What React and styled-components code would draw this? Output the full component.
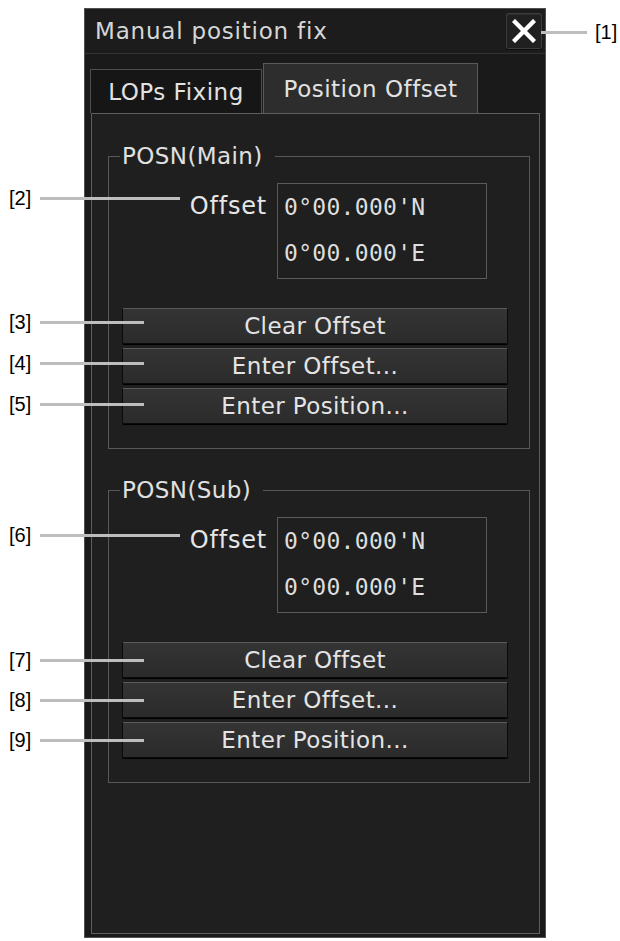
import React from "react";
import styled, { createGlobalStyle } from "styled-components";

const GlobalStyle = createGlobalStyle`
  html, body {
    margin: 0;
    padding: 0;
    background: #ffffff;
  }
  body {
    font-family: "DejaVu Sans", "Noto Sans", sans-serif;
  }
`;

const Page = styled.div`
  position: relative;
  width: 620px;
  height: 941px;
  box-sizing: border-box;
  padding: 8px 0 0 84px;
  overflow: hidden;
`;

const Window = styled.div`
  width: 462px;
  height: 930px;
  box-sizing: border-box;
  display: flex;
  flex-direction: column;
  background: #1a1a1a;
  border: 1px solid #505050;
`;

const TitleBar = styled.div`
  height: 44px;
  flex: none;
  display: flex;
  align-items: center;
  justify-content: space-between;
  padding: 0 3px 0 10px;
  border-bottom: 1px solid #333;
  background: #1c1c1c;
`;

const Title = styled.div`
  color: #d6d6d6;
  font-size: 23px;
  letter-spacing: 0.8px;
`;

const CloseButton = styled.button`
  width: 36px;
  height: 36px;
  padding: 0;
  display: flex;
  align-items: center;
  justify-content: center;
  background: #202020;
  border: 1px solid #3c3c3c;
  border-radius: 2px;
  box-shadow: inset 0 1px 0 #2e2e2e, 0 1px 0 #0c0c0c;
  cursor: pointer;
`;

const TabRow = styled.div`
  flex: none;
  display: flex;
  align-items: flex-end;
  height: 59px;
  padding-left: 5px;
`;

const Tab = styled.div`
  box-sizing: border-box;
  width: ${(p) => p.$width}px;
  height: ${(p) => (p.$active ? 50 : 44)}px;
  display: flex;
  align-items: center;
  justify-content: center;
  color: #e2e2e2;
  font-size: 23px;
  letter-spacing: 0.5px;
  background: ${(p) => (p.$active ? "#2d2d2d" : "#161616")};
  border: 1px solid ${(p) => (p.$active ? "#5a5a5a" : "#4e4e4e")};
  border-bottom: none;
  margin-right: 1px;
`;

const Panel = styled.div`
  flex: 1;
  margin: 0 5px 3px 6px;
  padding: 29px 9px 0 16px;
  background: #1f1f1f;
  border: 1px solid #5e5e5e;
  display: flex;
  flex-direction: column;
  gap: 28px;
`;

const Group = styled.fieldset`
  margin: 0;
  padding: 0 0 24px 13px;
  width: 422px;
  box-sizing: border-box;
  border: 1px solid #585858;
  min-width: 0;
`;

const Legend = styled.legend`
  margin-left: -2px;
  padding: 0 12px 0 2px;
  height: 26px;
  line-height: 26px;
  color: #e0e0e0;
  font-size: 23px;
  letter-spacing: 0.4px;
`;

const OffsetRow = styled.div`
  display: grid;
  grid-template-columns: 155px 210px;
  margin-top: 14px;
`;

const OffsetLabel = styled.div`
  text-align: right;
  padding: 0 10px 0 0;
  line-height: 46px;
  color: #e6e6e6;
  font-size: 24px;
  letter-spacing: 0.8px;
`;

const OffsetBox = styled.div`
  box-sizing: border-box;
  height: 96px;
  border: 1px solid #5a5a5a;
  padding-left: 6px;
`;

const OffsetValue = styled.div`
  line-height: 46px;
  color: #dedede;
  font-family: "DejaVu Sans Mono", monospace;
  font-size: 23px;
  letter-spacing: 0.3px;
`;

const ButtonStack = styled.div`
  margin-top: 29px;
  width: 386px;
  display: flex;
  flex-direction: column;
  gap: 4px;
`;

const ActionButton = styled.button`
  box-sizing: border-box;
  height: 36px;
  padding: 0;
  font-family: inherit;
  font-size: 23px;
  letter-spacing: 0.4px;
  color: #e4e4e4;
  background: linear-gradient(#343434, #2b2b2b);
  border: 1px solid #0a0a0a;
  border-top: 1px solid #5a5a5a;
  border-radius: 2px;
  box-shadow: 0 1px 0 #000;
  cursor: pointer;
`;

const Callout = styled.div`
  position: absolute;
  top: ${(p) => p.$y - 12}px;
  left: ${(p) => p.$x}px;
  height: 24px;
  display: flex;
  align-items: center;
  gap: ${(p) => p.$gap || 9}px;
`;

const CalloutLabel = styled.span`
  font-family: "Liberation Sans", Arial, sans-serif;
  font-size: 20px;
  color: #000;
`;

const CalloutLine = styled.span`
  display: block;
  width: ${(p) => p.$length}px;
  height: 3px;
  background: #bdbdbd;
`;

const CloseIcon = () => (
  <svg width="24" height="24" viewBox="0 0 24 24">
    <path
      d="M3 3 L21 21 M21 3 L3 21"
      stroke="#ffffff"
      strokeWidth="4.4"
      strokeLinecap="square"
      fill="none"
    />
  </svg>
);

const PositionGroup = ({ title }) => (
  <Group>
    <Legend>{title}</Legend>
    <OffsetRow>
      <OffsetLabel>Offset</OffsetLabel>
      <OffsetBox>
        <OffsetValue>0°00.000'N</OffsetValue>
        <OffsetValue>0°00.000'E</OffsetValue>
      </OffsetBox>
    </OffsetRow>
    <ButtonStack>
      <ActionButton>Clear Offset</ActionButton>
      <ActionButton>Enter Offset...</ActionButton>
      <ActionButton>Enter Position...</ActionButton>
    </ButtonStack>
  </Group>
);

const leftCallouts = [
  { n: 2, y: 198, len: 140 },
  { n: 3, y: 322, len: 104 },
  { n: 4, y: 363, len: 104 },
  { n: 5, y: 404, len: 104 },
  { n: 6, y: 535, len: 140 },
  { n: 7, y: 660, len: 104 },
  { n: 8, y: 700, len: 104 },
  { n: 9, y: 740, len: 104 },
];

export default function App() {
  return (
    <>
      <GlobalStyle />
      <Page>
        <Window>
          <TitleBar>
            <Title>Manual position fix</Title>
            <CloseButton>
              <CloseIcon />
            </CloseButton>
          </TitleBar>
          <TabRow>
            <Tab $width={172}>LOPs Fixing</Tab>
            <Tab $width={215} $active>
              Position Offset
            </Tab>
          </TabRow>
          <Panel>
            <PositionGroup title="POSN(Main)" />
            <PositionGroup title="POSN(Sub)" />
          </Panel>
        </Window>

        <Callout $x={541} $y={32} $gap={8}>
          <CalloutLine $length={46} />
          <CalloutLabel>[1]</CalloutLabel>
        </Callout>
        {leftCallouts.map((c) => (
          <Callout key={c.n} $x={9} $y={c.y}>
            <CalloutLabel>[{c.n}]</CalloutLabel>
            <CalloutLine $length={c.len} />
          </Callout>
        ))}
      </Page>
    </>
  );
}
